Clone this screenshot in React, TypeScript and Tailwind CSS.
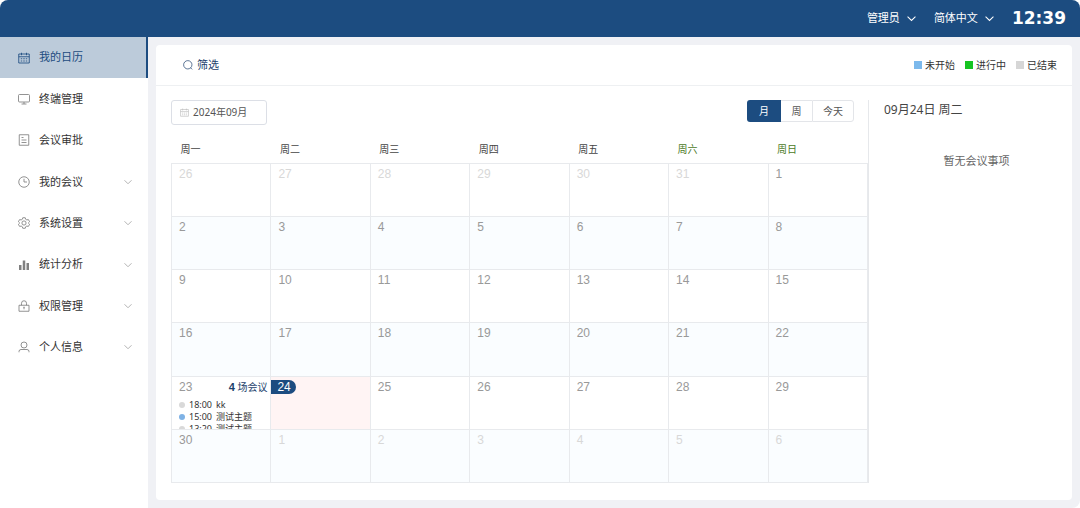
import React from "react";

interface Meeting {
  time: string;
  title: string;
  color: string;
}

interface MenuItem {
  label: string;
  icon: React.ReactNode;
  active?: boolean;
  expandable?: boolean;
}

const Icon: React.FC<{ className?: string; children: React.ReactNode }> = ({ className = "size-3", children }) => (
  <svg className={`shrink-0 ${className}`} viewBox="0 0 24 24" fill="none" stroke="currentColor" strokeWidth="1.7" aria-hidden="true">
    {children}
  </svg>
);

const Chevron: React.FC<{ className?: string }> = ({ className = "size-2" }) => (
  <svg className={`shrink-0 ${className}`} viewBox="0 0 16 16" fill="none" stroke="currentColor" strokeWidth="1.8" aria-hidden="true">
    <path d="M1 4.5 8 11.5l7-7" />
  </svg>
);

const calendarPaths = (
  <>
    <path d="M1.5 4h21v18h-21zM1.5 9.5h21M7 1.5v5M17 1.5v5" />
    <path d="M5.5 13.5h3M10.5 13.5h3M15.5 13.5h3M5.5 18h3M10.5 18h3M15.5 18h3" />
  </>
);

const menu: MenuItem[] = [
  { label: "我的日历", icon: calendarPaths, active: true },
  { label: "终端管理", icon: <path d="M3 3h18a2 2 0 0 1 2 2v11a2 2 0 0 1-2 2H3a2 2 0 0 1-2-2V5a2 2 0 0 1 2-2zM12 18v4M7 22h10" /> },
  { label: "会议审批", icon: <path d="M2.5 1.5h19v21h-19zM7 7h4M7 12h10M7 17h10" /> },
  {
    label: "我的会议",
    icon: (
      <>
        <circle cx="12" cy="12" r="10.5" />
        <path d="M12 5.5V12h6" />
      </>
    ),
    expandable: true,
  },
  {
    label: "系统设置",
    icon: (
      <>
        <path d="M9.5 1.5h5l.8 3 2.4 1.4 3-.8 2.5 4.3-2.2 2.1v1l2.2 2.1-2.5 4.3-3-.8-2.4 1.4-.8 3h-5l-.8-3-2.4-1.4-3 .8-2.5-4.3L3 12.5v-1L.8 9.4l2.5-4.3 3 .8 2.4-1.4z" />
        <circle cx="12" cy="12" r="4.2" />
      </>
    ),
    expandable: true,
  },
  {
    label: "统计分析",
    icon: <path d="M2 12h5v10H2zM9.5 3h5v19h-5zM17 8h5v14h-5z" fill="currentColor" stroke="none" />,
    expandable: true,
  },
  {
    label: "权限管理",
    icon: <path d="M2 10.5h20v12H2zM7 10.5v-4a5 5 0 0 1 10 0v4M12 14.5v4M10.5 14.5h3" />,
    expandable: true,
  },
  {
    label: "个人信息",
    icon: (
      <>
        <circle cx="12" cy="8" r="6" />
        <path d="M2 22.5V21a4 4 0 0 1 4-4h12a4 4 0 0 1 4 4v1.5" />
      </>
    ),
    expandable: true,
  },
];

const legend = [
  { label: "未开始", color: "bg-[#7cb9ec]" },
  { label: "进行中", color: "bg-[#16c421]" },
  { label: "已结束", color: "bg-[#d6d6d6]" },
];

const weekdays = ["周一", "周二", "周三", "周四", "周五", "周六", "周日"];

const weeks = [
  [26, 27, 28, 29, 30, 31, 1],
  [2, 3, 4, 5, 6, 7, 8],
  [9, 10, 11, 12, 13, 14, 15],
  [16, 17, 18, 19, 20, 21, 22],
  [23, 24, 25, 26, 27, 28, 29],
  [30, 1, 2, 3, 4, 5, 6],
];

const meetings: Meeting[] = [
  { time: "18:00", title: "kk", color: "bg-[#d9d9d9]" },
  { time: "15:00", title: "测试主题", color: "bg-[#7fb2e5]" },
  { time: "13:20", title: "测试主题", color: "bg-[#d9d9d9]" },
];

const Header: React.FC = () => (
  <header className="flex h-[37px] shrink-0 items-center justify-end rounded-t-lg bg-[#1c4c80] pr-[14px] text-[11px] text-white">
    <button className="mr-[18px] flex items-center gap-[7px]">
      管理员
      <Chevron className="size-[9px]" />
    </button>
    <button className="mr-[18px] flex items-center gap-[7px]">
      简体中文
      <Chevron className="size-[9px]" />
    </button>
    <time className="font-['DejaVu_Sans'] text-[17px] font-bold">12:39</time>
  </header>
);

const Sidebar: React.FC = () => (
  <nav className="w-[148px] shrink-0 bg-white">
    <ul className="grid h-[331px] auto-rows-fr">
      {menu.map((item) => (
        <li key={item.label}>
          <a
            href="#"
            className={`flex h-full items-center pr-4 pl-[18px] text-[11px] ${
              item.active ? "border-r-2 border-[#1c4c80] bg-[#bccbda] text-[#1c4c80]" : "text-[#333]"
            }`}
          >
            <span className={item.active ? "text-[#1c4c80]" : "text-[#808080]"}>
              <Icon>{item.icon}</Icon>
            </span>
            <span className="ml-[9px] flex-1">{item.label}</span>
            {item.expandable && (
              <span className="text-[#aaa]">
                <Chevron />
              </span>
            )}
          </a>
        </li>
      ))}
    </ul>
  </nav>
);

const DayCell: React.FC<{ day: number; row: number }> = ({ day, row }) => {
  const outside = (row === 0 && day > 20) || (row === 5 && day < 20);
  const today = row === 4 && day === 24;
  const busy = row === 4 && day === 23;

  return (
    <td className={`border border-[#e8eaed] p-0 align-top ${today ? "bg-[#fff4f4]" : row % 2 ? "bg-[#fafdff]" : "bg-white"}`}>
      {/* extra meetings are clipped at the bottom of the cell */}
      <div className="h-[52px] overflow-hidden">
        <div className="flex items-center justify-between pt-[3px] pr-[3px]">
          {today ? (
            <span className="rounded-r-full bg-[#1c4c80] pr-[5px] pl-[6px] font-['Liberation_Sans'] text-[12px] leading-[14px] text-white">{day}</span>
          ) : (
            <span className={`pl-[7px] font-['Liberation_Sans'] text-[12px] leading-[14px] ${outside ? "text-[#d8d8d8]" : "text-[#999]"}`}>{day}</span>
          )}
          {busy && (
            <span className="text-[10px] leading-[14px] text-[#1c3f6c]">
              <b className="font-['Liberation_Sans'] text-[11px]">4</b> 场会议
            </span>
          )}
        </div>
        {busy && (
          <ul className="mt-[5px]">
            {meetings.map((m) => (
              <li key={m.time} className="flex items-center pl-[7px] text-[9px] leading-[12px] text-[#333]">
                <span className={`size-[6px] rounded-full ${m.color}`}></span>
                <span className="ml-1">{m.time}</span>
                <span className="ml-1">{m.title}</span>
              </li>
            ))}
          </ul>
        )}
      </div>
    </td>
  );
};

const MonthTable: React.FC = () => (
  <table className="w-full flex-1 table-fixed border-collapse">
    <thead>
      <tr>
        {weekdays.map((name, i) => (
          <th key={name} className={`h-[27px] pl-[9px] text-left text-[10px] font-normal ${i > 4 ? "text-[#4c7a1e]" : "text-[#444]"}`}>
            {name}
          </th>
        ))}
      </tr>
    </thead>
    <tbody>
      {weeks.map((week, row) => (
        <tr key={row}>
          {week.map((day) => (
            <DayCell key={day} day={day} row={row} />
          ))}
        </tr>
      ))}
    </tbody>
  </table>
);

const App: React.FC = () => {
  return (
    <div className="flex min-h-screen flex-col bg-white font-['Noto_Sans','Noto_Sans_CJK_SC',sans-serif]">
      <Header />
      <div className="flex flex-1">
        <Sidebar />
        <main className="flex flex-1 rounded-br-lg bg-[#f0f1f5] p-2">
          <div className="flex flex-1 flex-col rounded-sm bg-white">
            <div className="flex h-[41px] items-center justify-between border-b border-[#eef0f2] pr-[15px] pl-[27px]">
              <button className="flex items-center gap-1 text-[11px] text-[#1c3f6c]">
                <Icon className="size-[10px]">
                  <circle cx="11.5" cy="11.5" r="10" />
                  <path d="m18 18.5 4 4" />
                </Icon>
                筛选
              </button>
              <ul className="flex gap-[10px] text-[10px] text-[#333]">
                {legend.map((item) => (
                  <li key={item.label} className="flex items-center gap-[3px]">
                    <span className={`size-2 ${item.color}`}></span>
                    {item.label}
                  </li>
                ))}
              </ul>
            </div>

            <div className="flex flex-1 pt-[14px] pb-[17px] pl-[15px]">
              <section className="flex flex-1 flex-col">
                <div className="mb-[11px] flex items-start justify-between pr-[14px]">
                  <button className="flex h-[25px] w-24 items-center gap-1 rounded-[3px] border border-[#dcdfe6] pl-2 text-[10px] text-[#555]">
                    <span className="text-[#bbb]">
                      <Icon className="size-[9px]">{calendarPaths}</Icon>
                    </span>
                    2024年09月
                  </button>
                  <div className="flex h-[22px] text-[10px] text-[#555]">
                    <button className="w-[34px] rounded-l-[3px] bg-[#1c4c80] text-white">月</button>
                    <button className="w-[31px] border-y border-[#e3e5e9]">周</button>
                    <button className="w-[42px] rounded-r-[3px] border border-[#e3e5e9]">今天</button>
                  </div>
                </div>
                <MonthTable />
              </section>
              <aside className="w-[204px] border-l border-[#e6e8eb] px-[15px] text-[#444]">
                <h2 className="text-[12px] leading-[20px]">09月24日 周二</h2>
                <p className="mt-8 pl-3 text-center text-[11px] leading-[18px] text-[#666]">暂无会议事项</p>
              </aside>
            </div>
          </div>
        </main>
      </div>
    </div>
  );
};

export default App;
